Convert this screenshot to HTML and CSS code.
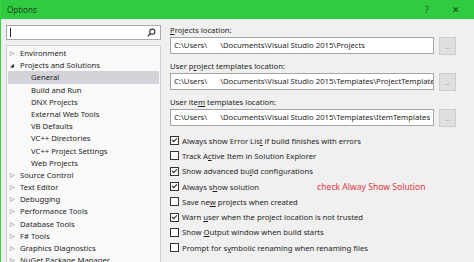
FILE: index.html
```html
<!DOCTYPE html>
<html lang="en">
<head>
    <meta charset="UTF-8">
    <title>Options</title>
    <link rel="stylesheet" href="styles.css">
</head>
<body>
    <div class="window">
        <div class="titlebar">
            <span class="title">Options</span>
            <span class="title-btn help">?</span>
            <span class="title-btn close">✕</span>
        </div>
        <div class="main">
            <div class="sidebar">
                <div class="search">
                    <span class="caret"></span>
                    <svg class="search-icon" width="9" height="9" viewBox="0 0 9 9">
                        <circle cx="5.3" cy="3.7" r="2.6" fill="none" stroke="#333" stroke-width="1.1"/>
                        <line x1="3.4" y1="5.6" x2="0.8" y2="8.2" stroke="#333" stroke-width="1.3"/>
                    </svg>
                </div>
                <div class="tree">
                    <div class="tree-row"><span class="arrow">▷</span>Environment</div>
                    <div class="tree-row"><span class="arrow open">◢</span>Projects and Solutions</div>
                    <div class="tree-row child selected">General</div>
                    <div class="tree-row child">Build and Run</div>
                    <div class="tree-row child">DNX Projects</div>
                    <div class="tree-row child">External Web Tools</div>
                    <div class="tree-row child">VB Defaults</div>
                    <div class="tree-row child">VC++ Directories</div>
                    <div class="tree-row child">VC++ Project Settings</div>
                    <div class="tree-row child">Web Projects</div>
                    <div class="tree-row"><span class="arrow">▷</span>Source Control</div>
                    <div class="tree-row"><span class="arrow">▷</span>Text Editor</div>
                    <div class="tree-row"><span class="arrow">▷</span>Debugging</div>
                    <div class="tree-row"><span class="arrow">▷</span>Performance Tools</div>
                    <div class="tree-row"><span class="arrow">▷</span>Database Tools</div>
                    <div class="tree-row"><span class="arrow">▷</span>F# Tools</div>
                    <div class="tree-row"><span class="arrow">▷</span>Graphics Diagnostics</div>
                    <div class="tree-row"><span class="arrow">▷</span>NuGet Package Manager</div>
                </div>
            </div>

            <div class="content">
                <div class="field">
                    <div class="label"><u>P</u>rojects location:</div>
                    <div class="field-row">
                        <div class="input">C:\Users\<span class="user"></span>\Documents\Visual Studio 2015\Projects</div>
                        <div class="browse">...</div>
                    </div>
                </div>
                <div class="field">
                    <div class="label">User p<u>r</u>oject templates location:</div>
                    <div class="field-row">
                        <div class="input">C:\Users\<span class="user"></span>\Documents\Visual Studio 2015\Templates\ProjectTemplates</div>
                        <div class="browse">...</div>
                    </div>
                </div>
                <div class="field">
                    <div class="label">User ite<u>m</u> templates location:</div>
                    <div class="field-row">
                        <div class="input">C:\Users\<span class="user"></span>\Documents\Visual Studio 2015\Templates\ItemTemplates</div>
                        <div class="browse">...</div>
                    </div>
                </div>

                <div class="checks">
                    <div class="check"><span class="box on"></span><span>Always show Error Lis<u>t</u> if build finishes with errors</span></div>
                    <div class="check"><span class="box"></span><span>Track A<u>c</u>tive Item in Solution Explorer</span></div>
                    <div class="check"><span class="box on"></span><span>Show advanced bu<u>i</u>ld configurations</span></div>
                    <div class="check"><span class="box on"></span><span>Always s<u>h</u>ow solution</span><span class="note">check Alway Show Solution</span></div>
                    <div class="check"><span class="box"></span><span>Save ne<u>w</u> projects when created</span></div>
                    <div class="check"><span class="box on"></span><span>Warn <u>u</u>ser when the project location is not trusted</span></div>
                    <div class="check"><span class="box"></span><span>Show <u>O</u>utput window when build starts</span></div>
                    <div class="check"><span class="box"></span><span>Prompt for s<u>y</u>mbolic renaming when renaming files</span></div>
                </div>
            </div>
        </div>
    </div>
</body>
</html>
```

FILE: styles.css
```css
body {
    margin: 0;
    font-family: "Noto Sans", sans-serif;
    font-size: 7.7px;
    color: #1e1e1e;
}

.window {
    width: 474px;
    height: 262px;
    overflow: hidden;
    background-color: #f0f0f0;
    border-left: 1px solid #3fcf50;
    box-sizing: border-box;
}

.titlebar {
    height: 19px;
    display: flex;
    align-items: center;
    padding-left: 6px;
    background-color: #2fcb41;
    color: #1d3d1f;
    font-size: 8px;
}

.title {
    flex: 1;
}

.title-btn {
    width: 12px;
    text-align: center;
    font-size: 8px;
}

.help {
    margin-right: 17px;
}

.close {
    margin-right: 12px;
    font-size: 9px;
}

.main {
    display: flex;
    padding: 6px 0 0 5px;
}

.sidebar {
    width: 155px;
}

.search {
    height: 13px;
    border: 1px solid #a9a9a9;
    background-color: #fff;
    display: flex;
    align-items: center;
    justify-content: space-between;
    padding: 0 4px 0 3px;
}

.caret {
    width: 1px;
    height: 9px;
    background-color: #222;
}

.tree {
    margin-top: 5px;
    height: 230px;
    border: 1px solid #cfcfcf;
    background-color: #f9f9f9;
    padding-top: 1px;
    overflow: hidden;
}

.tree-row {
    height: 12.2px;
    line-height: 12.2px;
    padding-left: 3px;
    white-space: nowrap;
    display: flex;
}

.tree-row.child {
    padding-left: 24px;
}

.tree-row.selected {
    background-color: #d3d3d9;
    margin: 0 1px;
    padding-left: 23px;
}

.arrow {
    width: 10px;
    font-size: 6px;
    color: #555;
}

.arrow.open {
    color: #222;
    font-size: 5px;
}

.content {
    margin-left: 9px;
    padding-top: 0;
}

.field {
    margin-bottom: 6px;
}

.label {
    height: 11px;
    line-height: 11px;
}

.field-row {
    display: flex;
    gap: 5px;
    margin-top: 1px;
}

.input {
    width: 259px;
    height: 15px;
    line-height: 15px;
    padding-left: 3px;
    border: 1px solid #a4a4a4;
    background-color: #fff;
    white-space: nowrap;
    overflow: hidden;
}

.user {
    display: inline-block;
    width: 13px;
}

.browse {
    width: 15px;
    height: 16px;
    border: 1px solid #cdcdcd;
    background-color: #dfdfdf;
    color: #777;
    text-align: center;
    font-size: 6px;
    line-height: 18px;
}

.checks {
    margin-top: 1px;
}

.check {
    height: 15.3px;
    display: flex;
    align-items: center;
    white-space: nowrap;
}

.box {
    width: 7px;
    height: 7px;
    border: 1px solid #333;
    background-color: #fff;
    margin-right: 3px;
    position: relative;
}

.box.on::after {
    content: "";
    position: absolute;
    left: 1px;
    top: 0;
    width: 4px;
    height: 2px;
    border-left: 1px solid #222;
    border-bottom: 1px solid #222;
    transform: translate(0, 1px) rotate(-45deg);
}

.note {
    margin-left: 58px;
    color: #e3343f;
    font-size: 8.6px;
}
```
